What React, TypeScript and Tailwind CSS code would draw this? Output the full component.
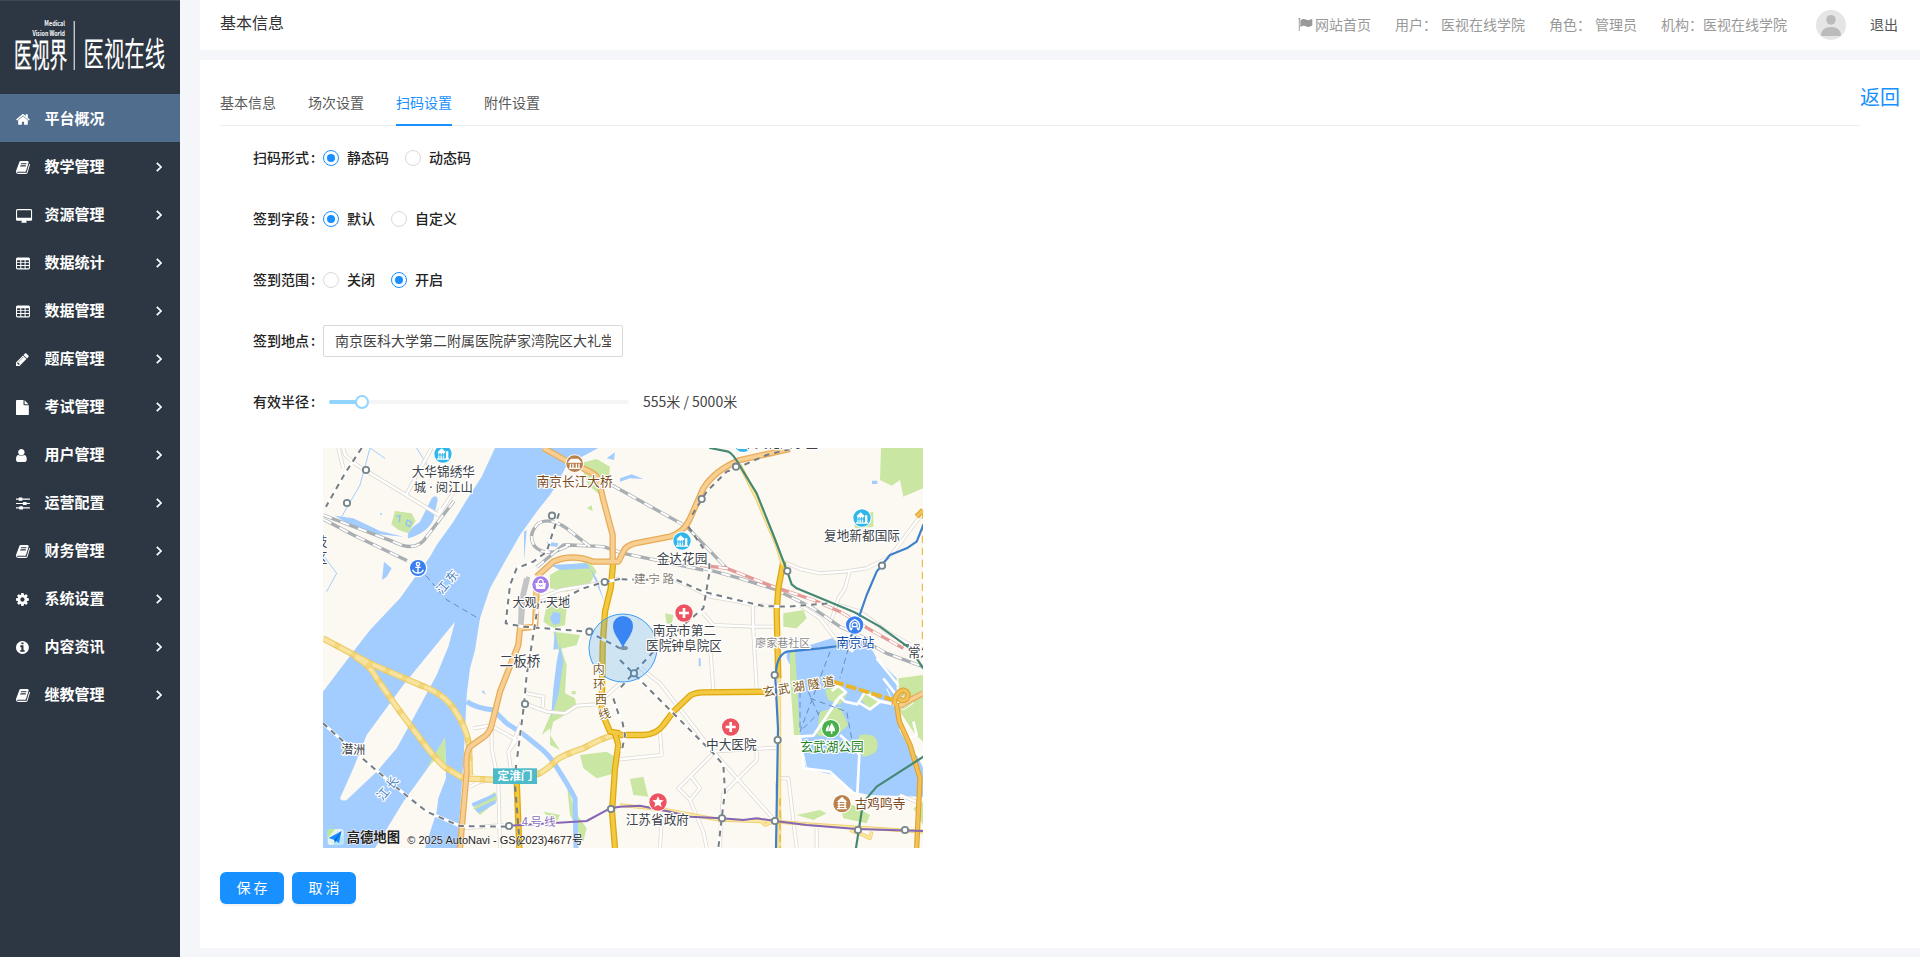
import React from "react";

const HOME =
  "M1472 992v480q0 26-19 45t-45 19h-384v-384h-256v384h-384q-26 0-45-19t-19-45v-480q0-1 .5-3t.5-3l575-474 575 474q1 2 1 6zm223-69l-62 74q-8 9-21 11h-3q-13 0-21-7l-692-577-692 577q-12 8-24 7-13-2-21-11l-62-74q-8-10-7-23.5t11-21.5l719-599q32-26 76-26t76 26l244 204v-195q0-14 9-23t23-9h192q14 0 23 9t9 23v408l219 182q10 8 11 21.5t-7 23.5z";
const BOOK =
  "M1703 478q40 57 18 129l-275 906q-19 64-76.5 107.5t-122.5 43.5h-923q-77 0-148.5-53.5t-99.5-131.5q-24-67-2-127 0-4 3-27t4-37q1-8-3-21.5t-3-19.5q2-11 8-21t16.5-23.5 16.5-23.5q23-38 45-91.5t30-91.5q3-10 .5-30t-.5-28q3-11 17-28t17-23q21-36 42-92t25-90q1-9-2.5-32t.5-28q4-13 22-30.5t22-22.5q19-26 42.5-84.5t27.5-96.5q1-8-3-25.5t-2-26.5q2-8 9-18t18-23 17-21q8-12 16.5-30.5t15-35 16-36 19.5-32 26.5-23.5 36-11.5 47.5 5.5l-1 3q38-9 51-9h761q74 0 114 56t18 130l-274 906q-36 119-71.5 153.5t-128.5 34.5h-869q-27 0-38 15-11 16-1 43 24 70 144 70h923q29 0 56-15.5t35-41.5l300-987q7-22 5-57 38 15 59 43zm-1064 2q-4 13 2 22.5t20 9.5h608q13 0 25.5-9.5t16.5-22.5l21-64q4-13-2-22.5t-20-9.5h-608q-13 0-25.5 9.5t-16.5 22.5zm-83 256q-4 13 2 22.5t20 9.5h608q13 0 25.5-9.5t16.5-22.5l21-64q4-13-2-22.5t-20-9.5h-608q-13 0-25.5 9.5t-16.5 22.5z";
const FILE =
  "M1152 512v-472q22 14 36 28l408 408q14 14 28 36h-472zm-128 32q0 40 28 68t68 28h544v1056q0 40-28 68t-68 28h-1344q-40 0-68-28t-28-68v-1600q0-40 28-68t68-28h800v544z";
const USER =
  "M1536 1399q0 109-62.5 187t-150.5 78h-854q-88 0-150.5-78t-62.5-187q0-85 8.5-160.5t31.5-152 58.5-131 94-89 134.500-34.500q131 128 313 128t313-128q76 0 134.500 34.500t94 89 58.500 131 31.500 152 8.500 160.500zm-256-887q0 159-112.500 271.500t-271.500 112.500-271.500-112.500-112.500-271.500 112.500-271.500 271.500-112.500 271.500 112.500 112.500 271.500z";
const PENCIL =
  "M491 1536l91-91-235-235-91 91v107h128v128h107zm523-928q0-22-22-22-10 0-17 7l-542 542q-7 7-7 17 0 22 22 22 10 0 17-7l542-542q7-7 7-17zm-54-192l416 416-832 832h-416v-416zm683 96q0 53-37 90l-166 166-416-416 166-165q36-38 90-38 53 0 91 38l235 234q37 39 37 91z";
const COG =
  "M1152 896q0-106-75-181t-181-75-181 75-75 181 75 181 181 75 181-75 75-181zm512-109v222q0 12-8 23t-20 13l-185 28q-19 54-39 91 35 50 107 138 10 12 10 25t-9 23q-27 37-99 108t-94 71q-12 0-26-9l-138-108q-44 23-91 38-16 136-29 186-7 28-36 28h-222q-14 0-24.5-8.5t-11.5-21.5l-28-184q-49-16-90-37l-141 107q-10 9-25 9-14 0-25-11-126-114-165-168-7-10-7-23 0-12 8-23 15-21 51-66.5t54-70.5q-27-50-41-99l-183-27q-13-2-21-12.5t-8-23.5v-222q0-12 8-23t19-13l186-28q14-46 39-92-40-57-107-138-10-12-10-24 0-10 9-23 26-36 98.5-107.5t94.5-71.5q13 0 26 10l138 107q44-23 91-38 16-136 29-186 7-28 36-28h222q14 0 24.5 8.5t11.5 21.5l28 184q49 16 90 37l142-107q9-9 24-9 13 0 25 10 129 119 165 170 7 8 7 22 0 12-8 23-15 21-51 66.5t-54 70.5q26 50 41 98l183 28q13 2 21 12.5t8 23.5z";
const INFO =
  "M1152 1376v-160q0-14-9-23t-23-9h-96v-512q0-14-9-23t-23-9h-320q-14 0-23 9t-9 23v160q0 14 9 23t23 9h96v320h-96q-14 0-23 9t-9 23v160q0 14 9 23t23 9h448q14 0 23-9t9-23zm-128-896v-160q0-14-9-23t-23-9h-192q-14 0-23 9t-9 23v160q0 14 9 23t23 9h192q14 0 23-9t9-23zm640 416q0 209-103 385.5t-279.5 279.5-385.5 103-385.5-103-279.5-279.5-103-385.5 103-385.5 279.5-279.5 385.5-103 385.5 103 279.5 279.5 103 385.5z";
const TABLE =
  "M224 192h1344q66 0 113 47t47 113v1088q0 66-47 113t-113 47H224q-66 0-113-47t-47-113V352q0-66 47-113t113-47zM192 512v220h384V512zm512 0v220h384V512zm512 0v220h384V512zM192 850v220h384V850zm512 0v220h384V850zm512 0v220h384V850zM192 1190v250q0 32 32 32h352v-282zm512 0v282h384v-282zm512 0v282h352q32 0 32-32v-250z";
const DESKTOP =
  "M160 128h1600q66 0 113 47t47 113v1088q0 66-47 113t-113 47h-544q0 50 32 100t32 72q0 64-64 64H704q-64 0-64-64 0-22 32-72t32-100H160q-66 0-113-47T0 1376V288q0-66 47-113t113-47zM160 256q-32 0-32 32v832q0 32 32 32h1600q32 0 32-32V288q0-32-32-32z";
const SLIDERS =
  "M64 310h320v140H64zM830 310h900v140H830zM448 190h320q64 0 64 64v256q0 64-64 64H448q-64 0-64-64V254q0-64 64-64zM64 826h830v140H64zM1340 826h390v140h-390zM958 706h320q64 0 64 64v256q0 64-64 64H958q-64 0-64-64V770q0-64 64-64zM64 1340h390v140H64zM900 1340h830v140H900zM518 1220h320q64 0 64 64v256q0 64-64 64H518q-64 0-64-64v-256q0-64 64-64z";

type Item = { label: string; d: string; x: number; active?: boolean };
const items: Item[] = [
  { label: "平台概况", d: HOME, x: 64, active: true },
  { label: "教学管理", d: BOOK, x: 64 },
  { label: "资源管理", d: DESKTOP, x: 0 },
  { label: "数据统计", d: TABLE, x: 64 },
  { label: "数据管理", d: TABLE, x: 64 },
  { label: "题库管理", d: PENCIL, x: 128 },
  { label: "考试管理", d: FILE, x: 128 },
  { label: "用户管理", d: USER, x: 256 },
  { label: "运营配置", d: SLIDERS, x: 64 },
  { label: "财务管理", d: BOOK, x: 64 },
  { label: "系统设置", d: COG, x: 128 },
  { label: "内容资讯", d: INFO, x: 128 },
  { label: "继教管理", d: BOOK, x: 64 },
];

function Logo() {
  return (
    <svg className="block h-[94px] w-[180px] shrink-0" viewBox="0 0 180 94" fill="#fff">
      <rect width="180" height="1" fill="#3d4956" />
      <g fontFamily="'Noto Sans CJK SC', sans-serif">
        <text transform="translate(65 25.7) scale(.8 1)" fontSize="6.8" fontWeight="700" textAnchor="end">Medical</text>
        <text transform="translate(65 35.6) scale(.78 1)" fontSize="6.8" fontWeight="700" textAnchor="end">Vision World</text>
        <text transform="translate(14 67.2) scale(.54 1)" fontSize="33" fontWeight="400" stroke="#fff" strokeWidth=".3">医视界</text>
        <text transform="translate(83.5 65.5) scale(.61 1)" fontSize="33.5">医视在线</text>
      </g>
      <rect x="73.7" y="21" width="1" height="49" />
    </svg>
  );
}

function Sidebar() {
  return (
    <aside className="flex h-full w-[180px] shrink-0 flex-col bg-[#2d3743] text-white">
      <Logo />
      <nav className="flex flex-col">
        {items.map((it) => (
          <a
            key={it.label}
            className={
              it.active
                ? "flex h-12 items-center bg-[#506d8d] pr-[18px] pl-4"
                : "flex h-12 items-center pr-[18px] pl-4"
            }
          >
            <svg
              className="mt-[2px] h-[15px] w-[17px] shrink-0"
              viewBox={`${it.x} 0 2030 1792`}
              fill="currentColor"
              fillRule="evenodd"
            >
              <path d={it.d} />
            </svg>
            <span className="ml-[11.5px] flex-1 pb-[2px] text-[15px] leading-none font-bold">{it.label}</span>
            {!it.active && (
              <svg className="mt-[2px] h-[10px] w-[6px]" viewBox="0 0 6 10" fill="none" stroke="currentColor" strokeWidth="1.7">
                <path d="M.8.8 5 5 .8 9.2" />
              </svg>
            )}
          </a>
        ))}
      </nav>
    </aside>
  );
}

function Header() {
  return (
    <header className="flex h-[50px] shrink-0 items-center bg-white pr-[22px] pl-5 text-sm leading-none text-[#999]">
      <span className="flex-1 pb-[6px] text-base leading-none text-[#333]">基本信息</span>
      <svg className="mr-[2px] mb-[2px] h-[13px] w-[15px]" viewBox="0 0 15 13" fill="#999">
        <path d="M.4.6a1 1 0 1 1 1.3 1V13H.8V1.5zM2.4 2.2C5 .4 6.5.7 8.5 1.7c2 .8 3.5.1 5.800-.9v6.800c-2.500 1.300-4 1.700-6 .8-2-.9-3.300-.9-5.900.7z" />
      </svg>
      <span className="mr-6 pb-[2px]">网站首页</span>
      <span className="mr-6 flex gap-1 pb-[2px]"><span>用户：</span><span>医视在线学院</span></span>
      <span className="mr-6 flex gap-1 pb-[2px]"><span>角色：</span><span>管理员</span></span>
      <span className="mr-[29px] pb-[2px]">机构：医视在线学院</span>
      <svg className="mr-6 h-[30px] w-[30px]" viewBox="0 0 30 30">
        <circle cx="15" cy="15" r="15" fill="#e5e5e5" />
        <ellipse cx="15" cy="9.800" rx="4.700" ry="4.900" fill="#bbb" />
        <path d="M5 26c0-6 4-9 10-9s10 3 10 9z" fill="#bbb" />
      </svg>
      <span className="pb-[2px] text-[#555]">退出</span>
    </header>
  );
}

function Tabs() {
  const tabs = ["基本信息", "场次设置", "扫码设置", "附件设置"];
  return (
    <div className="flex h-[46px] items-stretch">
      <div className="flex flex-1 gap-8 border-b border-[#ececec] text-sm leading-none text-[#595959]">
        {tabs.map((t) => (
          <div
            key={t}
            className={
              t === "扫码设置"
                ? "-mb-px flex h-[46px] items-center border-b-2 border-[#1890ff] text-[#1890ff]"
                : "flex h-[44px] items-center"
            }
          >
            {t}
          </div>
        ))}
      </div>
      <a className="mt-[7px] w-10 text-xl leading-none text-[#1890ff]">返回</a>
    </div>
  );
}

function Radio({ label, on }: { label: string; on?: boolean }) {
  return (
    <label className="mr-2 flex items-center font-medium">
      <span
        className={
          on
            ? "flex h-4 w-4 items-center justify-center rounded-full border border-[#1890ff]"
            : "h-4 w-4 rounded-full border border-[#d9d9d9]"
        }
      >
        {on && <span className="h-2 w-2 rounded-full bg-[#1890ff]" />}
      </span>
      <span className="px-2 pb-[2px]">{label}</span>
    </label>
  );
}

function Row({ label, children }: { label: string; children: React.ReactNode }) {
  return (
    <div className="flex h-8 items-center text-sm leading-none text-[#222]">
      <div className="flex w-[70px] shrink-0 pb-[2px] font-medium">
        {label}
        <span className="ml-[2px]">:</span>
      </div>
      {children}
    </div>
  );
}

const LABEL_FONT = "'Noto Sans CJK SC', sans-serif";
const MIXED_FONT = "'Noto Sans', 'Noto Sans CJK SC', sans-serif";

function Label({
  x, y, t, c = "#3c4248", s = 38, halo = "#fff", w = 400, f = LABEL_FONT,
}: { x: number; y: number; t: string; c?: string; s?: number; halo?: string; w?: number; f?: string }) {
  return (
    <text x={x} y={y} fontSize={s} fill={c} stroke={halo} strokeWidth="7" paintOrder="stroke" strokeLinejoin="round" fontWeight={w} fontFamily={f} textAnchor="middle">
      {t}
    </text>
  );
}

function Road({ d, w, edge, fill }: { d: string[]; w: number; edge: string; fill: string }) {
  return (
    <g fill="none" strokeLinejoin="round" strokeLinecap="butt">
      {d.map((p) => <path key={"e" + p} d={p} stroke={edge} strokeWidth={w} />)}
      {d.map((p) => <path key={"f" + p} d={p} stroke={fill} strokeWidth={w * 0.6} />)}
    </g>
  );
}

function Dashed({ d, base = "#fff" }: { d: string[]; base?: string }) {
  return (
    <g fill="none" strokeLinejoin="round">
      {d.map((p) => <path key={"b" + p} d={p} stroke={base} strokeWidth="9" />)}
      {d.map((p) => <path key={"d" + p} d={p} stroke="#757d82" strokeWidth="6" strokeDasharray="17 15" />)}
    </g>
  );
}

function Rail({ d, c = "#a9aeb2" }: { d: string[]; c?: string }) {
  return (
    <g fill="none" strokeLinejoin="round">
      {d.map((p) => <path key={"a" + p} d={p} stroke={c} strokeWidth="10" />)}
      {d.map((p) => <path key={"c" + p} d={p} stroke="#fff" strokeWidth="6" strokeDasharray="28 28" />)}
    </g>
  );
}

function Building({ x, y }: { x: number; y: number }) {
  return (
    <g transform={`translate(${x} ${y})`}>
      <circle r="29" fill="#fff" />
      <circle r="26" fill="#2fb6ea" />
      <path fill="#fff" d="M-17-5-4-17 9-5H6V13H-14V-5zM9-8h7V13H9zM-18 13h36v4h-36z" />
      <path stroke="#2fb6ea" strokeWidth="3" d="M-9-3V14M-2-3V14M4-3V14M-14 3H6" />
    </g>
  );
}

function Hospital({ x, y }: { x: number; y: number }) {
  return (
    <g transform={`translate(${x} ${y})`}>
      <circle r="29" fill="#fff" />
      <circle r="26" fill="#ee5360" />
      <path d="M-15 0H15M0-15V15" stroke="#fff" strokeWidth="8" />
    </g>
  );
}

const minorRoads = [
  "M70 9 75 30 110 60 258 150 355 210 402 140M258 150 335 9M355 210 360 190M55 9 70 70",
  "M1390 350 1440 372 1500 385 1570 380 1640 370 1710 335 1800 215M1590 375 1575 430 1555 460 1530 540M1555 480 1620 500 1700 560 1800 615",
  "M1065 405 1110 425 1170 455 1230 465 1290 478 1370 485M1150 505 1180 540 1300 545 1365 545M1298 478 1300 560 1310 735M1170 600 1180 735M1440 480 1500 520 1545 580 1600 620",
  "M620 745 670 755 668 788M617 777 680 800 735 805 770 782 830 778 900 715M510 840 590 885M515 830 515 910 535 1010 540 1209M590 885 565 920 575 990M605 830 580 890 565 920M450 1025 480 1010 520 1005M430 1150 550 1140",
  "M950 660 1020 715 1175 915 1365 1127M880 945 1025 930 1020 860M1180 925 1075 1030 1110 1065 1150 1160 1160 1209M1110 990 1140 1030 1110 1065M1170 920 1300 912 1370 908M1310 920 1310 945 1210 1045 1205 1105M1200 1209 1203 1120M1380 1000 1405 1000 1430 1209M1025 1130 1020 1209M1490 1150 1490 1209M1740 1050 1800 1075M1370 1010 1380 1125",
  "M520 840 460 850M660 460 720 435 840 415 900 400",
];
const lakeRoad =
  "M1440 880 1460 970 1530 980 1600 1040 1610 1050M1480 875 1550 760 1580 740M1660 760 1720 775 1700 730M1720 775 1740 750 1780 775 1750 795 1720 775";
const lakePaths =
  "M1440 875 1480 872 1560 755 1578 742 1555 722 1535 738M1560 755 1575 770 1612 778 1635 742 1680 770 1650 793 1612 770M1680 770 1725 778M1725 745 1690 700M1560 870 1600 905 1618 930 1612 1045M1740 850 1775 915 1809 940M1765 880 1790 870 1780 830M1440 870 1452 970 1530 980 1600 1045M1670 640 1735 720";
const orangeRoads = [
  "M670 9 735 45 810 80Q838 92 842 130L850 165 878 270V350",
  "M650 395 700 350Q755 325 820 350L895 350 910 320Q918 298 960 292L1050 275Q1090 262 1108 225L1150 130Q1185 75 1260 45L1410 12",
  "M655 400 650 430 645 550M645 545 600 550 595 600 540 740 515 840Q508 868 485 880L450 905Q438 920 439 960L440 980 420 1209",
];
const yellowRoads = [
  "M880 350 872 430 855 500 848 600 845 800 870 860 900 865M885 865 895 900 885 970 876 1100 885 1209",
  "M1390 350 1375 430 1370 500 1375 700",
  "M900 870H970Q1010 868 1030 840L1060 800 1110 752Q1125 742 1150 742L1345 740",
  "M590 1005 598 1209",
];
const paleRoads = [
  "M9 580 150 655 300 720Q370 745 400 790 440 845 447 900L450 990M105 635Q150 660 170 700L240 800 300 880Q360 960 380 970L430 1000 540 1005 650 988Q672 982 710 945 725 932 790 910 860 870 900 868",
];

function CityMap() {
  return (
    <svg className="block h-[400px] w-[600px]" viewBox="9 9 1800 1200">
      <rect x="9" y="9" width="1800" height="1200" fill="#fcf9f2" />
      <g fill="#c9e6a2">
        <path d="M225 198 275 205 287 228 265 265 235 255 214 238zM780 55 830 42 870 65 865 120 840 150 805 120zM800 190 815 180 818 198zM690 390 740 360 810 350 830 380 810 415 740 440 690 430zM680 480 740 490 735 540 700 550 670 530zM700 560 780 570 770 600 710 615z" />
        <path d="M720 600 740 660 735 745 765 760 770 790 700 830 690 870 720 915 690 900 690 850 665 870 695 800 700 740zM740 1010 765 1100 800 1150 790 1190 750 1110zM780 930 860 920 885 935 885 985 830 1000 790 970zM755 738h12v10h-12zM460 1090 525 1040 535 1065 480 1110zM672 1100 720 1110 705 1140 690 1130z" />
        <path d="M930 1002 970 995 985 1055 940 1050zM1035 505 1060 510 1055 540 1040 535zM1683 9H1809V130L1750 155 1740 105 1715 122 1680 105zM1600 215 1660 200V245L1605 250zM1390 505 1450 495 1460 520 1430 550 1390 545zM1560 1075 1600 1080 1650 1110 1640 1135 1570 1120zM1430 1110 1500 1095 1520 1105 1480 1125zM1780 1090 1809 1070V1140z" />
        <path d="M1735 700 1809 690V890L1780 860 1740 800z" />
      </g>
      <g fill="#a3ccff">
        <path d="M525 9 485 95 440 165 400 230 350 300 330 335 290 390 240 460 150 555 115 600 9 740V1209H413L420 1100 432 920 440 750 450 670 465 615 480 520 510 430 560 340 600 270 650 200 690 150 715 110 740 60 835 9z" />
        <path d="M440 770Q470 790 520 795L560 835Q610 865 650 900 690 930 712 970 745 1020 765 1060L768 1209" fill="none" stroke="#a3ccff" strokeWidth="15" />
        <path d="M335 160Q350 145 353 165L340 225Q320 265 265 280 255 260 300 230zM45 212 100 220 180 258 250 275 150 265 90 240zM192 350 215 370 200 395 186 405zM612 260 620 255 612 350zM680 290 715 295 712 305 685 303zM700 500 722 505 720 535 700 540 690 520zM705 550 715 610 700 615zM860 40 885 22 882 45z" />
        <path d="M690 360 800 355 830 400 855 475 840 440 810 370 720 375zM720 600 730 650 715 750 693 820 700 730 710 650zM490 735 498 750 485 740zM455 1075 525 1045 528 1053 460 1087zM465 1093 525 1065 528 1075 475 1105zM900 100 935 88 970 102 930 100 900 110zM1656 107H1672V117H1656zM1136 640h6v24h-6z" />
        <path d="M1400 620 1470 600 1550 575 1640 585 1670 640 1730 700 1730 760 1740 830 1770 890 1810 970V1055L1650 1050 1600 1040 1540 990 1455 970 1440 870 1425 690 1400 640z" />
        <path d="M9 330 50 385 20 440M150 9 120 120 65 215M150 9 195 40M290 9 340 90" fill="none" stroke="#a3ccff" strokeWidth="3" />
        <circle cx="183" cy="207" r="3" />
      </g>
      <g fill="#fcf9f2">
        <path d="M405 530 340 610 250 720 180 815 140 870 100 970 60 1060Q62 1070 80 1065L170 980 230 910 280 820 350 690 385 605z" />
        <path d="M375 877 330 960 250 1070 165 1209H315L350 1100 355 1060 378 1000z" />
      </g>
      <g fill="#c9e6a2">
        <path d="M375 877 378 960 350 940 320 970z" />
        <path d="M1410 615H1425L1440 870 1422 870 1410 700zM1515 735 1550 720 1580 750 1560 780 1525 765zM1500 800 1560 785 1585 840 1540 880 1490 870zM1620 870Q1675 860 1673 905 1670 930 1630 935L1605 900zM1620 760 1650 740 1680 770 1650 795z" />
      </g>
      <path d="M228 215 240 212 238 232M262 225 275 232 268 245 258 238z" fill="none" stroke="#8fc3f5" strokeWidth="4" />

      <Road d={minorRoads} w={12} edge="#dedad2" fill="#fff" />
      <path d={lakePaths} fill="none" stroke="#fff" strokeWidth="8" strokeLinejoin="round" />
      <path d={lakeRoad} fill="none" stroke="#fff" strokeWidth="3" strokeLinejoin="round" />
      <path d="M625 395 612 450 605 540M618 400 602 470 600 545" fill="none" stroke="#c3c4c5" strokeWidth="12" />
      <Rail
        d={[
          "M9 210 220 290Q290 325 320 275L402 168",
          "M9 222 100 270 262 347",
          "M875 120 1100 245 1220 370",
          "M650 367 730 300 750 300M810 305 740 250Q690 215 655 235 620 270 645 305 670 330 710 318L750 300 850 305 910 325 1150 375",
          "M1150 370 1260 400 1370 435 1480 490 1560 545 1660 590",
        ]}
      />
      <Rail d={["M1140 360 1220 370 1360 425 1480 465 1560 500 1660 560 1750 610"]} c="#e39a97" />
      <Rail d={["M1620 580 1700 625 1809 665"]} />

      <Road d={paleRoads} w={19} edge="#edcf72" fill="#f9e49d" />
      <path d={paleRoads[0]} fill="none" stroke="#e9c140" strokeWidth="19" strokeDasharray="0 40 16 0" opacity=".35" />
      <Road d={yellowRoads} w={19} edge="#dda90f" fill="#f3c941" />
      <Road d={["M1378 700V1209", "M1260 60 1310 160 1370 300 1388 360", "M900 1080 1040 1095 1200 1125 1365 1130 1500 1140 1809 1160", "M1315 1120 1335 1140 1360 1130M1590 1155 1630 1170 1650 1180 1655 1160"]} w={11} edge="#efcb69" fill="#fae7a0" />
      <Road d={orangeRoads} w={19} edge="#e7ac59" fill="#f8cf92" />
      <Road d={["M1809 745 1770 765 1735 785", "M1720 770 1745 740"]} w={18} edge="#e7ac59" fill="#f8cf92" />
      <Road d={["M1722 780Q1725 740 1750 735 1772 742 1760 762 1748 772 1736 760M1729 775 1738 830 1770 900 1800 1000 1790 1209", "M1809 195 1790 215"]} w={16} edge="#dca32e" fill="#f3c155" />
      <path d="M1540 710 1720 765" fill="none" stroke="#eab52b" strokeWidth="12" strokeDasharray="32 8" />
      <path d="M1808 200V600M1380 1060V1209" fill="none" stroke="#e9bd42" strokeWidth="5" strokeDasharray="22 14" />

      <Dashed
        d={[
          "M125 9 75 85 18 185",
          "M9 835 110 925 220 1020 320 1100 420 1143 560 1145",
          "M717 205 680 320 640 350 590 370 570 420 557 535 610 545 805 560 900 610",
          "M900 402 850 412 790 430 740 455 655 475",
          "M905 403 1040 405M1070 405 1150 440 1230 460 1330 483 1400 485 1530 475",
          "M1168 355 1168 385 1150 490 1090 540 1040 590 1030 620",
          "M900 645 940 685 1180 925 1210 960 1215 1040 1205 1120 1195 1209",
          "M1000 620 940 685 900 730",
          "M907 830 915 870 905 920M880 760 900 820",
        ]}
      />
      <Dashed d={["M655 475 635 600 620 690 612 780 590 950"]} />
      <g fill="none" stroke="#757d82" strokeWidth="6" strokeDasharray="17 15">
        <path d="M588 960 585 1020 600 1209M1410 12 1340 30 1260 65 1220 80 1160 140 1110 220M1105 245 1150 310" />
      </g>
      <Dashed d={["M1750 600H1809"]} />
      <g fill="none" stroke="#668fbd" strokeWidth="3" strokeDasharray="18 12">
        <path d="M318 392 378 463 480 523M1530 620 1440 860 1500 800M1585 610 1560 700M1440 740V860M1465 740 1500 820M1470 760 1580 800 1595 880" />
      </g>

      <g fill="none" strokeLinejoin="round" strokeLinecap="round">
        <path d="M1170 9 1225 20Q1240 25 1270 80L1310 145 1360 270 1402 380 1415 418 1430 430 1600 500 1680 545 1770 610 1810 670M1810 935 1670 1025 1640 1060 1625 1100 1608 1209" stroke="#458873" strokeWidth="6.5" />
        <path d="M1810 240 1790 290 1760 310 1710 330 1670 380 1640 450 1605 550 1580 600 1500 610 1400 620Q1372 630 1368 680L1366 700 1374 850 1368 1209" stroke="#3f80ca" strokeWidth="6.5" />
        <path d="M568 1142 800 1128 870 1090 900 1085 960 1082 1050 1100 1110 1115 1205 1120 1270 1125 1310 1120 1365 1128 1460 1140 1610 1152 1809 1158" stroke="#8466b5" strokeWidth="6" />
      </g>
      <g fill="#fff" stroke="#76868b" strokeWidth="5.5">
        {[
          [138, 75], [81, 174], [696, 212], [854, 411], [808, 560], [942, 685], [615, 777], [567, 1143], [873, 1092],
          [1145, 162], [1248, 65], [1402, 378], [1686, 362], [1364, 690], [1373, 885], [1365, 1128], [1206, 1120], [1614, 1155], [1755, 1155],
        ].map(([x, y]) => <circle key={`${x}-${y}`} cx={x} cy={y} r="9.5" />)}
      </g>

      <circle cx="909" cy="609" r="102" fill="#1791fc" fillOpacity=".2" stroke="#3b9df8" strokeWidth="3" />
      <ellipse cx="912" cy="609" rx="12" ry="6" fill="#8291a1" />
      <path d="M909 608C898 583 879 567 879 542a30 29 0 0 1 60 0c0 25-20 42-30 66z" fill="#3985f4" />

      <Building x={369} y={27} />
      <Building x={1269} y={-5} />
      <Building x={1626} y={219} />
      <Building x={1086} y={288} />
      <Hospital x={1092} y={504} />
      <Hospital x={1232} y={846} />

      <g transform="translate(764 56)">
        <circle r="28" fill="#fff" /><circle r="25" fill="#b9804a" />
        <path d="M-17-5-10-13H10L17-5zM-13 0V12M-5 0V12M5 0V12M13 0V12M-17 14H17" fill="#fff" stroke="#fff" strokeWidth="4" />
      </g>
      <g transform="translate(294 369)" fill="none" stroke="#fff" strokeWidth="4">
        <circle r="26" fill="#397ff0" />
        <circle cy="-12" r="5" /><path d="M0-7V15M-8-2H8M-16 5Q-12 15 0 15 12 15 16 5" />
      </g>
      <g transform="translate(662 419)">
        <circle r="28" fill="#fff" /><circle r="25" fill="#a57ee8" />
        <path d="M-16-5H16L13 13H-13z" fill="#fff" /><path d="M-8-3Q-8-16 0-16 8-16 8-3" fill="none" stroke="#fff" strokeWidth="4" /><path d="M-6 1Q0 8 6 1" fill="none" stroke="#a57ee8" strokeWidth="3" />
      </g>
      <g transform="translate(1604 540)">
        <circle r="29" fill="#fff" /><circle r="26" fill="#397ff0" />
        <path d="M-8 13H-13Q-20-8 0-16 20-8 13 13H8M-7 5Q-9-7 0-7 9-7 7 5z M-7 8-12 16M7 8 12 16" fill="none" stroke="#fff" strokeWidth="4" />
      </g>
      <g transform="translate(1532 851)">
        <circle r="29" fill="#fff" /><circle r="26" fill="#48af4c" />
        <path d="M3-17Q14-2 13 8H5V16H1V8H-7Q-4-6 3-17zM-7-12Q-3-9-8 8H-15Q-14-5-7-12z" fill="#fff" />
      </g>
      <g transform="translate(1566 1076)">
        <circle r="29" fill="#fff" /><circle r="26" fill="#bb814a" />
        <path d="M0-18-11-7H11zM-9-6V14M9-6V14M-13 0H13M-13 8H13M-15 15H15" fill="#fff" stroke="#fff" strokeWidth="4" />
      </g>
      <g transform="translate(1014 1071)">
        <circle r="29" fill="#fff" /><circle r="26" fill="#ee5360" />
        <path d="M0-17 5-6 17-5 8 3 11 15 0 9-11 15-8 3-17-5-5-6z" fill="#fff" />
      </g>

      <Label x={370} y={93} t="大华锦绣华" />
      <Label x={370} y={141} t="城 · 阅江山" s={37} f={MIXED_FONT} />
      <Label x={764} y={123} t="南京长江大桥" c="#7e4a1c" />
      <Label x={664} y={486} t="大观 · 天地" s={36} f={MIXED_FONT} />
      <Label x={1086} y={354} t="金达花园" />
      <Label x={1626} y={285} t="复地新都国际" />
      <Label x={1380} y={6} t="中央花园小区" />
      <Label x={1002} y={415} t="建 宁 路" c="#857d74" s={35} />
      <Label x={1093} y={570} t="南京市第二" />
      <Label x={1092} y={616} t="医院钟阜院区" />
      <Label x={1388} y={607} t="廖家巷社区" c="#8c8c8c" s={33} />
      <Label x={1606} y={606} t="南京站" c="#1551a8" />
      <Label x={1801} y={636} t="常发" />
      <Label x={3} y={304} t="技" />
      <Label x={3} y={351} t="区" />
      <Label x={600} y={662} t="二板桥" s={41} />
      <Label x={100} y={927} t="潜洲" s={36} />
      <Label x={1234} y={912} t="中大医院" />
      <Label x={1012} y={1137} t="江苏省政府" />
      <Label x={1536} y={917} t="玄武湖公园" c="#21841f" />
      <Label x={1680} y={1089} t="古鸡鸣寺" c="#7e4a1c" />
      <Label x={656} y={1144} t="4 号 线" c="#8970bd" s={34} />
      <g transform="rotate(-9 1436 724)"><Label x={1436} y={738} t="玄 武 湖 隧 道" c="#7d5a1a" s={37} /></g>
      <Label x={836} y={688} t="内" c="#7d5a1a" s={36} />
      <Label x={837} y={731} t="环" c="#7d5a1a" s={36} />
      <Label x={843} y={777} t="西" c="#7d5a1a" s={36} />
      <g transform="rotate(-15 853 806)"><Label x={853} y={820} t="线" c="#7d5a1a" s={36} /></g>
      <g transform="rotate(-50 382 410)"><Label x={382} y={423} t="江 东" c="#4a7fc1" s={36} /></g>
      <g transform="rotate(-50 203 1030)"><Label x={203} y={1043} t="江 长" c="#4a7fc1" s={36} /></g>
      <rect x="519" y="970" width="132" height="47" fill="#4ebbca" />
      <Label x={585} y={1005} t="定淮门" c="#fff" halo="#4ebbca" s={35} w={700} />

      <g transform="translate(23 1152)">
        <rect width="48" height="48" rx="10" fill="#e6f4ed" />
        <path d="M0 10Q0 0 10 0L22 0 0 28z" fill="#bce98e" /><path d="M14 48 48 16V38Q48 48 38 48z" fill="#b6e6fa" />
        <path d="M3 27 42 6 34 42 20 33z" fill="#148dff" /><path d="M20 33 42 6 21 43z" fill="#0762d5" />
      </g>
      <text x="80" y="1190" fontSize="40" fontWeight="700" fill="#222" stroke="#fff" strokeWidth="3" paintOrder="stroke" fontFamily={LABEL_FONT}>高德地图</text>
      <text x="262" y="1196" fontSize="33" fill="#222" stroke="#fff" strokeWidth="2" paintOrder="stroke" fontFamily="'Liberation Sans', 'Noto Sans CJK SC', sans-serif">© 2025 AutoNavi - GS(2023)4677号</text>
    </svg>
  );
}

export default function App() {
  return (
    <div className="flex h-[957px] w-full overflow-hidden bg-[#f5f6fa] font-['Noto_Sans_CJK_SC',sans-serif]">
      <Sidebar />
      <div className="ml-5 flex min-w-0 flex-1 flex-col gap-[10px]">
        <Header />
        <main className="flex h-[888px] flex-col bg-white px-5 pt-5">
          <Tabs />
          <div className="mt-4 flex flex-col gap-[29px] pl-[33px]">
            <Row label="扫码形式"><Radio label="静态码" on /><Radio label="动态码" /></Row>
            <Row label="签到字段"><Radio label="默认" on /><Radio label="自定义" /></Row>
            <Row label="签到范围"><Radio label="关闭" /><Radio label="开启" on /></Row>
            <Row label="签到地点">
              <div className="flex h-8 w-[300px] items-center rounded-[2px] border border-[#d9d9d9] px-[11px] pb-[2px] text-[#444]">
                <span className="overflow-hidden leading-5 whitespace-nowrap">南京医科大学第二附属医院萨家湾院区大礼堂</span>
              </div>
            </Row>
            <Row label="有效半径">
              <div className="ml-[6px] flex h-1 w-[300px] items-center rounded-sm bg-[#f5f5f5]">
                <div className="h-1 w-[33px] rounded-sm bg-[#91d5ff]" />
                <div className="-ml-[7px] h-[14px] w-[14px] rounded-full border-2 border-[#91d5ff] bg-white" />
              </div>
              <span className="ml-[14px] pb-[2px] text-[#444]">555米 / 5000米</span>
            </Row>
          </div>
          <div className="mt-[30px] ml-[103px]"><CityMap /></div>
          <div className="mt-6 flex gap-2">
            <button className="h-8 w-16 rounded-md bg-[#1890ff] pb-[2px] text-sm leading-none text-white shadow-[0_2px_0_rgba(0,0,0,0.045)]">保 存</button>
            <button className="h-8 w-16 rounded-md bg-[#1890ff] pb-[2px] text-sm leading-none text-white shadow-[0_2px_0_rgba(0,0,0,0.045)]">取 消</button>
          </div>
        </main>
      </div>
    </div>
  );
}
